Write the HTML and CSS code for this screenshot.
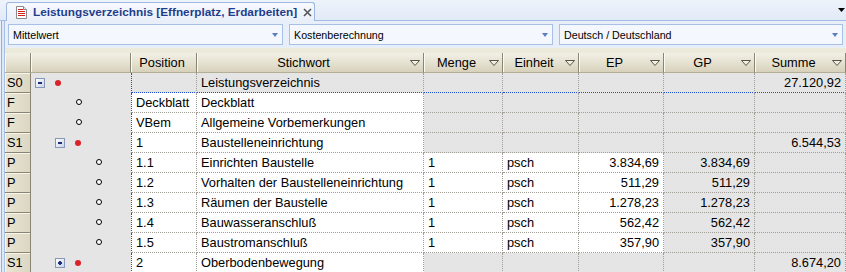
FILE: index.html
```html
<!DOCTYPE html>
<html lang="de">
<head>
    <meta charset="UTF-8">
    <title>Leistungsverzeichnis</title>
    <link rel="stylesheet" href="styles.css">
</head>
<body>
    <div class="tabbar">
        <div class="tab">
            <svg class="doc-icon" width="11" height="13" viewBox="0 0 11 13">
                <path d="M0.5 0.5h7l3 3v9h-10z" fill="#fff" stroke="#8a8a8a"/>
                <path d="M7.5 0.5v3h3" fill="#e8e8e8" stroke="#8a8a8a"/>
                <rect x="2" y="3" width="5" height="1" fill="#d42020"/>
                <rect x="2" y="5" width="7" height="1" fill="#d42020"/>
                <rect x="2" y="7" width="7" height="1" fill="#d42020"/>
                <rect x="2" y="9" width="7" height="1" fill="#d42020"/>
            </svg>
            <span class="tab-title">Leistungsverzeichnis [Effnerplatz, Erdarbeiten]</span>
            <svg class="tab-close" width="9" height="9" viewBox="0 0 9 9">
                <path d="M1 1l7 7M8 1l-7 7" stroke="#555" stroke-width="1.6"/>
            </svg>
        </div>
        <svg class="tab-menu" width="7" height="4" viewBox="0 0 7 4">
            <polygon points="0,0 7,0 3.5,4" fill="#000"/>
        </svg>
    </div>

    <div class="frame">
        <div class="pane">
            <div class="filters">
                <div class="combo"><span>Mittelwert</span><i class="combo-arrow"></i></div>
                <div class="combo"><span>Kostenberechnung</span><i class="combo-arrow"></i></div>
                <div class="combo"><span>Deutsch / Deutschland</span><i class="combo-arrow"></i></div>
            </div>

            <div class="grid">
                <div class="row head">
                    <div class="hc"></div>
                    <div class="hc"></div>
                    <div class="hc"><span class="ht">Position</span></div>
                    <div class="hc"><span class="ht">Stichwort</span><svg class="sort" width="10" height="6"><polygon points="0.5,0.5 9.5,0.5 5,5.5"/></svg></div>
                    <div class="hc"><span class="ht">Menge</span><svg class="sort" width="10" height="6"><polygon points="0.5,0.5 9.5,0.5 5,5.5"/></svg></div>
                    <div class="hc"><span class="ht">Einheit</span><svg class="sort" width="10" height="6"><polygon points="0.5,0.5 9.5,0.5 5,5.5"/></svg></div>
                    <div class="hc"><span class="ht">EP</span><svg class="sort" width="10" height="6"><polygon points="0.5,0.5 9.5,0.5 5,5.5"/></svg></div>
                    <div class="hc"><span class="ht">GP</span><svg class="sort" width="10" height="6"><polygon points="0.5,0.5 9.5,0.5 5,5.5"/></svg></div>
                    <div class="hc"><span class="ht">Summe</span><svg class="sort" width="10" height="6"><polygon points="0.5,0.5 9.5,0.5 5,5.5"/></svg></div>
                </div>

                <div class="row focus">
                    <div class="rh">S0</div>
                    <div class="tree lvl-0"><span class="slot"><i class="tog minus"></i></span><span class="slot"><i class="dot"></i></span></div>
                    <div class="c pos"></div>
                    <div class="c">Leistungsverzeichnis</div>
                    <div class="c"></div>
                    <div class="c"></div>
                    <div class="c num"></div>
                    <div class="c num"></div>
                    <div class="c num">27.120,92</div>
                </div>

                <div class="row">
                    <div class="rh">F</div>
                    <div class="tree lvl-2"><span class="slot"><i class="leaf"></i></span></div>
                    <div class="c pos w">Deckblatt</div>
                    <div class="c w">Deckblatt</div>
                    <div class="c"></div>
                    <div class="c"></div>
                    <div class="c num"></div>
                    <div class="c num"></div>
                    <div class="c num"></div>
                </div>

                <div class="row">
                    <div class="rh">F</div>
                    <div class="tree lvl-2"><span class="slot"><i class="leaf"></i></span></div>
                    <div class="c pos w">VBem</div>
                    <div class="c w">Allgemeine Vorbemerkungen</div>
                    <div class="c"></div>
                    <div class="c"></div>
                    <div class="c num"></div>
                    <div class="c num"></div>
                    <div class="c num"></div>
                </div>

                <div class="row">
                    <div class="rh">S1</div>
                    <div class="tree lvl-1"><span class="slot"><i class="tog minus"></i></span><span class="slot"><i class="dot"></i></span></div>
                    <div class="c pos w">1</div>
                    <div class="c w">Baustelleneinrichtung</div>
                    <div class="c"></div>
                    <div class="c"></div>
                    <div class="c num"></div>
                    <div class="c num"></div>
                    <div class="c num">6.544,53</div>
                </div>

                <div class="row">
                    <div class="rh">P</div>
                    <div class="tree lvl-3"><span class="slot"><i class="leaf"></i></span></div>
                    <div class="c pos w">1.1</div>
                    <div class="c w">Einrichten Baustelle</div>
                    <div class="c w">1</div>
                    <div class="c w">psch</div>
                    <div class="c num w">3.834,69</div>
                    <div class="c num">3.834,69</div>
                    <div class="c num"></div>
                </div>

                <div class="row">
                    <div class="rh">P</div>
                    <div class="tree lvl-3"><span class="slot"><i class="leaf"></i></span></div>
                    <div class="c pos w">1.2</div>
                    <div class="c w">Vorhalten der Baustelleneinrichtung</div>
                    <div class="c w">1</div>
                    <div class="c w">psch</div>
                    <div class="c num w">511,29</div>
                    <div class="c num">511,29</div>
                    <div class="c num"></div>
                </div>

                <div class="row">
                    <div class="rh">P</div>
                    <div class="tree lvl-3"><span class="slot"><i class="leaf"></i></span></div>
                    <div class="c pos w">1.3</div>
                    <div class="c w">Räumen der Baustelle</div>
                    <div class="c w">1</div>
                    <div class="c w">psch</div>
                    <div class="c num w">1.278,23</div>
                    <div class="c num">1.278,23</div>
                    <div class="c num"></div>
                </div>

                <div class="row">
                    <div class="rh">P</div>
                    <div class="tree lvl-3"><span class="slot"><i class="leaf"></i></span></div>
                    <div class="c pos w">1.4</div>
                    <div class="c w">Bauwasseranschluß</div>
                    <div class="c w">1</div>
                    <div class="c w">psch</div>
                    <div class="c num w">562,42</div>
                    <div class="c num">562,42</div>
                    <div class="c num"></div>
                </div>

                <div class="row">
                    <div class="rh">P</div>
                    <div class="tree lvl-3"><span class="slot"><i class="leaf"></i></span></div>
                    <div class="c pos w">1.5</div>
                    <div class="c w">Baustromanschluß</div>
                    <div class="c w">1</div>
                    <div class="c w">psch</div>
                    <div class="c num w">357,90</div>
                    <div class="c num">357,90</div>
                    <div class="c num"></div>
                </div>

                <div class="row">
                    <div class="rh">S1</div>
                    <div class="tree lvl-1"><span class="slot"><i class="tog plus"></i></span><span class="slot"><i class="dot"></i></span></div>
                    <div class="c pos w">2</div>
                    <div class="c w">Oberbodenbewegung</div>
                    <div class="c"></div>
                    <div class="c"></div>
                    <div class="c num"></div>
                    <div class="c num"></div>
                    <div class="c num">8.674,20</div>
                </div>
            </div>
        </div>
    </div>
</body>
</html>
```

FILE: styles.css
```css
body {
    margin: 0;
    width: 846px;
    height: 272px;
    overflow: hidden;
    font-family: "Liberation Sans", Arial, sans-serif;
    background: #eaf0fa;
}

/* document tab strip */
.tabbar {
    display: flex;
    align-items: flex-end;
    height: 20px;
    border-bottom: 1px solid #a3bde6;
    background: linear-gradient(#eef3fb, #e2eaf7);
}
.tab {
    display: flex;
    align-items: center;
    box-sizing: border-box;
    width: 309px;
    height: 19px;
    margin-left: 6px;
    margin-bottom: -1px;
    padding: 0 0 1px 9px;
    border: 1px solid #9cb7e1;
    border-bottom: none;
    border-radius: 3px 3px 0 0;
    background: linear-gradient(#f7f9fe, #e9eff9);
    position: relative;
}
.doc-icon {
    margin-right: 6px;
    margin-top: 1px;
}
.tab-title {
    font-size: 11.8px;
    font-weight: bold;
    color: #1f3d8c;
    white-space: nowrap;
}
.tab-close {
    margin-left: 6px;
    margin-top: 1px;
}
.tab-menu {
    margin-left: auto;
    margin-right: 1px;
    margin-bottom: 8px;
}

/* content frame */
.frame {
    margin-left: 1px;
    border-left: 1px solid #92b1e0;
    padding-left: 2px;
    background: #dde7f6;
}
.pane {
    border-left: 1px solid #a9c1e7;
}

.filters {
    display: grid;
    grid-template-columns: 275px 264px 1fr;
    column-gap: 6px;
    padding: 3px;
    background: #e8eff9;
}
.combo {
    display: flex;
    align-items: center;
    box-sizing: border-box;
    height: 21px;
    padding: 0 4px;
    border: 1px solid #a8c0e5;
    background: #f4f7fd;
    font-size: 10.7px;
    color: #000;
}
.combo span {
    flex: 1;
}
.combo-arrow {
    width: 0;
    height: 0;
    border-left: 3.5px solid transparent;
    border-right: 3.5px solid transparent;
    border-top: 4px solid #5a7ec2;
    margin-top: 1px;
}

/* grid */
.grid {
    padding-top: 5px;
    background: #ecebdb;
    font-size: 12.8px;
}
.row {
    display: grid;
    grid-template-columns: 26px 100px 66px 227px 79px 76px 85px 91px 91px;
    height: 20px;
}
.row > div {
    box-sizing: border-box;
    height: 20px;
}

.hc {
    display: flex;
    align-items: center;
    padding: 0 3px 1px 0;
    border-right: 1px solid #8a8676;
    border-bottom: 1px solid #b3ae98;
    box-shadow: inset 1px 0 #fbfaf4;
    background: linear-gradient(#f2f0e6, #e3dfcd 60%, #d7d1bb);
}
.ht {
    flex: 1;
    text-align: center;
    color: #000;
}
.sort {
    flex: none;
    margin-top: 1px;
}
.sort polygon {
    fill: #f1eee2;
    stroke: #57544a;
    stroke-width: 1;
}

.rh {
    padding: 2px 0 0 2px;
    border-right: 1px solid #8a8676;
    border-bottom: 1px solid #8a8676;
    box-shadow: inset 1px 1px #f7f5ec;
    background: linear-gradient(90deg, #e9e5d4, #dcd7c3);
    line-height: 16px;
}

.tree {
    display: flex;
    align-items: center;
    background: #e5e5e5;
}
.lvl-0 { padding-left: 4px; }
.lvl-1 { padding-left: 24px; }
.lvl-2 { padding-left: 44px; }
.lvl-3 { padding-left: 64px; }
.slot {
    display: flex;
    align-items: center;
    width: 20px;
    height: 10px;
}
.tog {
    position: relative;
    box-sizing: border-box;
    width: 10px;
    height: 10px;
    border: 1px solid #8797b8;
    background: linear-gradient(135deg, #ffffff, #c9d3e8);
    margin-top: -1px;
}
.tog::before {
    content: "";
    position: absolute;
    left: 2px;
    top: 3px;
    width: 4px;
    height: 2px;
    background: #1c2f7a;
}
.tog.plus::after {
    content: "";
    position: absolute;
    left: 3px;
    top: 2px;
    width: 2px;
    height: 4px;
    background: #1c2f7a;
}
.dot {
    width: 6px;
    height: 6px;
    border-radius: 50%;
    background: #d8232a;
}
.leaf {
    box-sizing: border-box;
    width: 6px;
    height: 6px;
    margin-left: 1px;
    margin-top: -2px;
    border: 1px solid #000;
    border-radius: 50%;
    background: #fff;
}

.c {
    padding: 0 4px;
    line-height: 19px;
    white-space: nowrap;
    overflow: hidden;
    border-right: 1px dotted #a09e96;
    border-bottom: 1px dotted #a09e96;
    background: #e5e5e5;
}
.c.w {
    background: #fff;
}
.c.num {
    text-align: right;
}
.c.pos {
    border-left: 1px dotted #1f4fd6;
}
.focus .c {
    border-bottom-color: #1f4fd6;
}
```
